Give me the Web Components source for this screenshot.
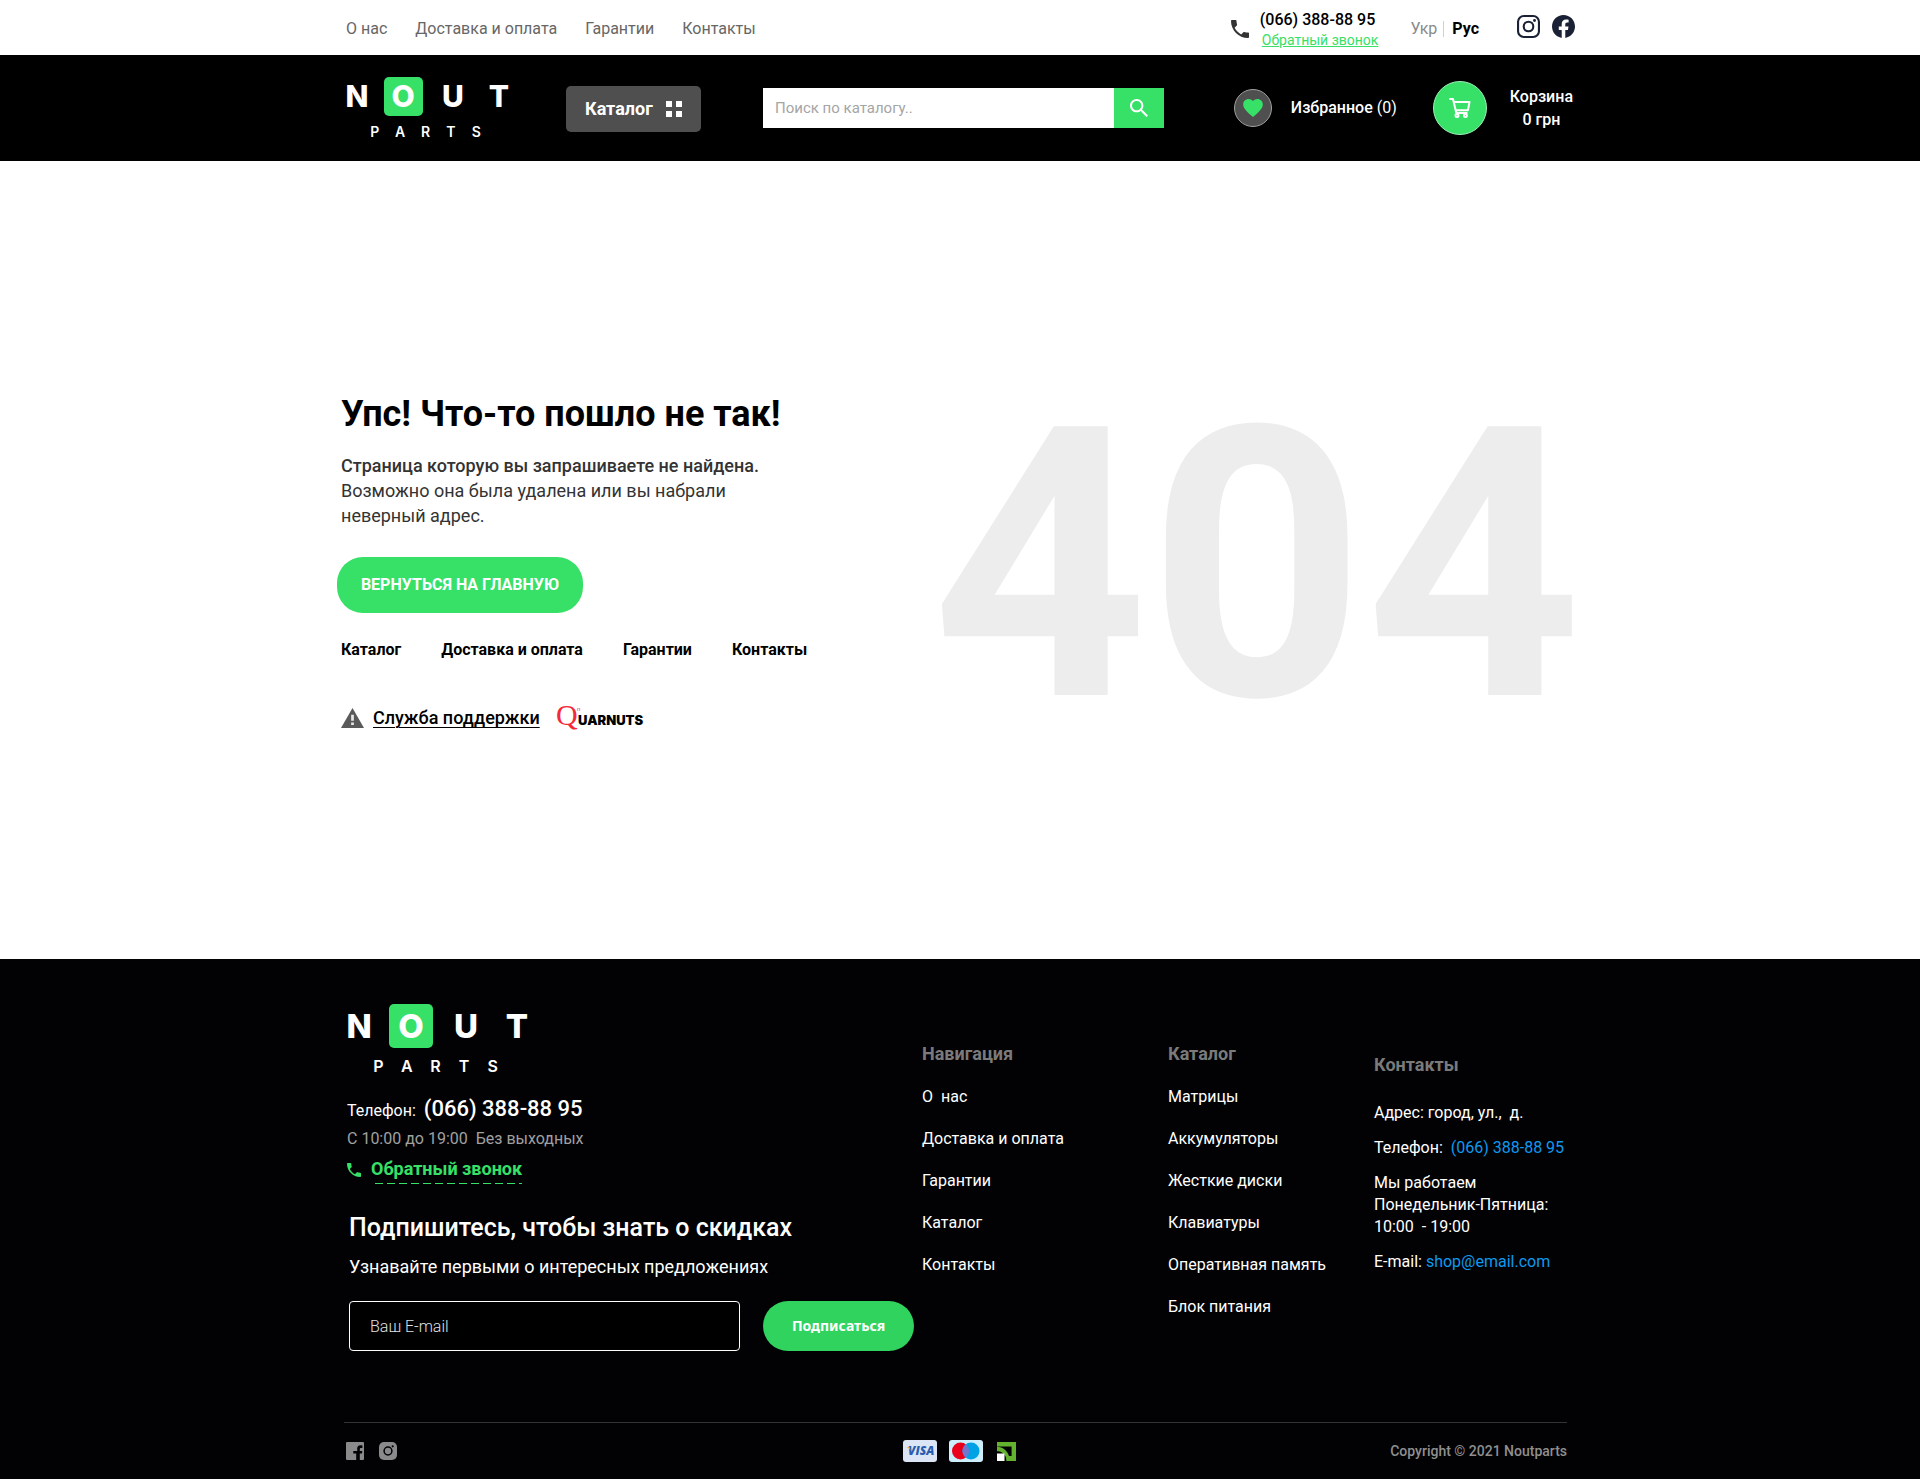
<!DOCTYPE html>
<html lang="ru">
<head>
<meta charset="utf-8">
<meta name="viewport" content="width=device-width, initial-scale=1">
<title>Nout Parts — 404</title>
<style>
  body { margin: 0; background: #fff; color: #000; font: 400 16px/24px Roboto, "Liberation Sans", sans-serif; }
</style>
</head>
<body>
<np-page></np-page>
<script>
const base = `
  *, *::before, *::after { box-sizing: border-box; }
  a { color: inherit; text-decoration: none; }
  button, input { font: inherit; color: inherit; border: 0; margin: 0; padding: 0; }
  button { cursor: pointer; }
  h1, h2, h3, p, ul { margin: 0; padding: 0; }
  ul { list-style: none; }
  svg { display: block; }
  .wrap { width: 100%; max-width: 1232px; margin: 0 auto; }
`;

function define(name, css, html) {
  customElements.define(name, class extends HTMLElement {
    constructor() {
      super();
      const root = this.attachShadow({ mode: "open" });
      const t = document.createElement("template");
      t.innerHTML = `<style>${base}${css}</style>${html}`;
      root.append(t.content.cloneNode(true));
    }
  });
}

const icons = {
  phone: ["3 3 18 18", `<path fill="currentColor" d="M6.62 10.79c1.44 2.83 3.76 5.14 6.59 6.59l2.2-2.2c.27-.27.67-.36 1.02-.24 1.12.37 2.33.57 3.57.57.55 0 1 .45 1 1V20c0 .55-.45 1-1 1-9.39 0-17-7.61-17-17 0-.55.45-1 1-1h3.5c.55 0 1 .45 1 1 0 1.25.2 2.45.57 3.57.11.35.03.74-.25 1.02l-2.2 2.2z"/>`],
  search: ["3 3 17.5 17.5", `<path fill="currentColor" d="M15.5 14h-.79l-.28-.27C15.41 12.59 16 11.11 16 9.5 16 5.91 13.09 3 9.5 3S3 5.91 3 9.5 5.91 16 9.5 16c1.61 0 3.09-.59 4.23-1.57l.27.28v.79l5 4.99L20.49 19l-4.99-5zm-6 0C7.01 14 5 11.99 5 9.5S7.01 5 9.5 5 14 7.01 14 9.5 11.99 14 9.5 14z"/>`],
  grid: ["0 0 16 16", `<path fill="currentColor" d="M0 0h6v6H0zM10 0h6v6h-6zM0 10h6v6H0zM10 10h6v6h-6z"/>`],
  heart: ["2 3 20 18.35", `<path fill="currentColor" d="M12 21.35l-1.45-1.32C5.4 15.36 2 12.28 2 8.5 2 5.42 4.42 3 7.5 3c1.74 0 3.41.81 4.5 2.09C13.09 3.81 14.76 3 16.5 3 19.58 3 22 5.42 22 8.5c0 3.78-3.4 6.86-8.55 11.54L12 21.35z"/>`],
  cart: ["0 0 22 20", `<g fill="none" stroke="currentColor" stroke-width="2" stroke-linejoin="round" stroke-linecap="round"><path d="M1 1h3l3.3 14h10.4"/><path d="M4.900 4h15.600l-1.600 8.200H7"/><circle cx="8" cy="17.400" r="1.500"/><circle cx="16.400" cy="17.400" r="1.500"/></g>`],
  instagram: ["0 0 24 24", `<g fill="none" stroke="currentColor" stroke-width="2.2"><rect x="1.1" y="1.1" width="21.8" height="21.8" rx="6"/><circle cx="12" cy="12" r="5"/></g><circle cx="18.3" cy="5.7" r="1.5" fill="currentColor"/>`],
  facebook: ["0 0 24 24", `<path fill="currentColor" d="M24 12.07C24 5.44 18.63.07 12 .07S0 5.44 0 12.07c0 5.99 4.39 10.96 10.13 11.86v-8.39H7.08v-3.47h3.05V9.43c0-3.01 1.79-4.67 4.53-4.67 1.31 0 2.69.24 2.69.24v2.95h-1.52c-1.49 0-1.96.93-1.96 1.87v2.25h3.33l-.53 3.47h-2.8v8.39C19.61 23.03 24 18.06 24 12.07z"/>`],
  warning: ["1 2 22 19", `<path fill="currentColor" d="M1 21h22L12 2 1 21z"/><path fill="#e8e8e8" d="M10.700 8.500h2.600v5.700h-2.600zM10.700 15.800h2.600v2.400h-2.600z"/>`],
  fbsquare: ["0 0 18 18", `<path fill="currentColor" fill-rule="evenodd" d="M1 0h16a1 1 0 0 1 1 1v16a1 1 0 0 1-1 1h-3.2v-6.6h2.2l.3-2.4h-2.500V7.200c0-.8.3-1.2 1.200-1.200h1.400V3.400c-.3 0-1-.1-1.900-.1-2 0-3.300 1.200-3.300 3.300V9H7.300v2.400h2.900V18H1a1 1 0 0 1-1-1V1a1 1 0 0 1 1-1z"/>`],
  igsquare: ["0 0 18 18", `<rect width="18" height="18" rx="5" fill="currentColor"/><circle cx="9" cy="9" r="3.9" fill="none" stroke="#020204" stroke-width="1.5"/><circle cx="13.700" cy="4.300" r="1.100" fill="#020204"/>`],
  visa: ["0 0 34 22", `<rect width="34" height="22" rx="3" fill="#dbe5f5"/><text x="5" y="15" font-family="Open Sans, sans-serif" font-size="12" font-weight="800" font-style="italic" fill="#2a5db0">VISA</text><path d="M3.500 7h3l1.200 3.600C6.800 9 5.300 7.800 3.500 7z" fill="#f0a92b"/>`],
  maestro: ["0 0 34 22", `<rect width="34" height="22" rx="3" fill="#cdeefd"/><circle cx="11.500" cy="11" r="8.500" fill="#eb001b"/><circle cx="22" cy="11" r="8.500" fill="#00a2e5"/><path d="M16.750 4.300a8.500 8.500 0 0 1 0 13.400a8.500 8.500 0 0 1 0-13.400z" fill="#7375cf"/>`],
  privat: ["0 0 19 19", `<path fill="#62b22f" d="M0 0h19v19H9.300c0-4-1-6-4-8.200C3.700 9.700 2 9.300 0 9.300V4.800c3 .2 5.600 1 7.600 2.600 2.300 1.800 3.600 4 4.400 6.600h2.600V4.400H0z"/><rect y="11.500" width="7.500" height="7.500" fill="#fff"/>`],
  quarnuts: ["0 0 90 26", `<text x="-1" y="20" font-family="Liberation Serif, serif" font-size="30" fill="#f5293a">Q</text><text x="20" y="6" font-family="Liberation Sans, sans-serif" font-size="6" fill="#f5293a">n</text><text x="21" y="20" font-family="Inter, sans-serif" font-size="13" font-weight="900" fill="#000">UARNUTS</text>`]
};

customElements.define("np-icon", class extends HTMLElement {
  constructor() {
    super();
    this.attachShadow({ mode: "open" });
  }
  connectedCallback() {
    const [box, body] = icons[this.getAttribute("name")];
    this.shadowRoot.innerHTML = `<style>:host{display:block;flex:none}svg{display:block;width:100%;height:100%;overflow:visible}</style><svg viewBox="${box}" aria-hidden="true">${body}</svg>`;
  }
});

define("np-logo", `
  :host { display: block; flex: none; color: #fff; font-family: Inter, sans-serif; font-weight: 800; --tile: 39px; --big: 30px; --small: 14px; --gap: 6px; --cols: 20px 72px 28px 64px; --sub: 127px; --nudge: 15px; }
  :host([size="large"]) { --tile: 44px; --big: 33px; --small: 16px; --gap: 8px; --cols: 22px 82px 28px 74px; --sub: 143px; --nudge: 16px; }
  a, .tile { display: block; }
  .top { display: grid; grid-template-columns: var(--cols); justify-items: center; font-size: var(--big); line-height: var(--tile); }
  .tile { width: var(--tile); height: var(--tile); border-radius: 5px; background: #37e067; text-align: center; }
  .sub { display: grid; grid-template-columns: repeat(5, 1fr); justify-items: center; width: var(--sub); margin: var(--gap) 0 0 var(--nudge); font-size: var(--small); line-height: 20px; font-weight: 600; }
`, `<a href="#"><span class="top"><span>N</span><span class="tile">O</span><span>U</span><span>T</span></span>
  <span class="sub"><span>P</span><span>A</span><span>R</span><span>T</span><span>S</span></span></a>`);

define("np-topbar", `
  :host { display: block; }
  .wrap { display: flex; align-items: center; height: 55px; padding: 2px 1px 0 2px; }
  nav { display: flex; gap: 28px; color: #666; }
  .phone { display: flex; align-items: center; gap: 11px; margin-left: auto; }
  .phone np-icon { width: 18px; height: 18px; color: #333; }
  .phone div { display: grid; padding-top: 2px; line-height: 20px; font-weight: 500; }
  .phone .call { padding-left: 2px; font-size: 14px; font-weight: 400; color: #37e067; text-decoration: underline; }
  .lang { display: flex; align-items: center; margin-left: 32px; color: #8a8a8a; }
  .lang a + a { margin-left: 6px; padding-left: 8px; border-left: 1px solid #d0d0d0; line-height: 16px; font-weight: 700; color: #000; }
  .social { display: flex; align-items: center; gap: 12px; margin-left: 38px; padding-bottom: 4px; color: #1b2135; }
  .social np-icon { width: 23px; height: 23px; }
`, `<div class="wrap">
  <nav aria-label="Меню"><a href="#">О нас</a><a href="#">Доставка и оплата</a><a href="#">Гарантии</a><a href="#">Контакты</a></nav>
  <div class="phone"><np-icon name="phone"></np-icon><div><a href="tel:0663888895">(066) 388-88 95</a><a class="call" href="#">Обратный звонок</a></div></div>
  <div class="lang"><a href="#">Укр</a><a href="#">Рус</a></div>
  <div class="social"><a href="#" aria-label="Instagram"><np-icon name="instagram"></np-icon></a><a href="#" aria-label="Facebook"><np-icon name="facebook"></np-icon></a></div>
</div>`);

define("np-header", `
  :host { display: block; background: #000; color: #fff; }
  .wrap { display: flex; align-items: center; height: 106px; padding: 0 3px; font-weight: 500; }
  np-logo { padding-top: 2px; }
  .catalog { display: flex; align-items: center; justify-content: space-between; width: 135px; height: 46px; margin: 2px 0 0 35px; padding: 0 19px; border-radius: 5px; background: #4f4f4f; font-size: 18px; font-weight: 700; }
  .catalog np-icon { width: 16px; height: 16px; }
  form { display: flex; flex: 0 1 401px; height: 40px; margin-left: 62px; }
  input { flex: 1; min-width: 0; padding: 0 12px; border-radius: 0; background: #fff; color: #000; font-size: 15px; font-weight: 400; outline: 0; }
  input::placeholder { color: #a5a5a5; opacity: 1; }
  form button { display: grid; place-items: center; width: 50px; background: #37e067; }
  form np-icon { width: 18px; height: 18px; }
  .fav { display: flex; align-items: center; gap: 19px; margin-left: auto; }
  .round { display: grid; place-items: center; width: 38px; height: 38px; border: 1px solid #a0a0a0; border-radius: 50%; background: #4f4f4f; color: #37e067; }
  .round np-icon { width: 20px; height: 18px; }
  .fav .n { font-weight: 400; }
  .cart { display: flex; align-items: center; gap: 23px; margin-left: 36px; text-align: center; line-height: 23px; }
  .cart .round { width: 54px; height: 54px; border-color: #9bf0b3; background: #37e067; color: #fff; }
  .cart .round np-icon { width: 22px; height: 20px; }
`, `<div class="wrap">
  <np-logo></np-logo>
  <button class="catalog" type="button">Каталог<np-icon name="grid"></np-icon></button>
  <form role="search"><input type="search" aria-label="Поиск по каталогу" placeholder="Поиск по каталогу.."><button type="button" aria-label="Найти"><np-icon name="search"></np-icon></button></form>
  <a class="fav" href="#"><span class="round"><np-icon name="heart"></np-icon></span><span>Избранное <span class="n">(0)</span></span></a>
  <a class="cart" href="#"><span class="round"><np-icon name="cart"></np-icon></span><span>Корзина<br>0 грн</span></a>
</div>`);

define("np-not-found", `
  :host { display: flex; align-items: center; padding-top: 4px; }
  .wrap { display: flex; align-items: center; justify-content: space-between; max-width: 1244px; padding: 0 0 0 3px; }
  h1 { font-size: 36px; line-height: 42px; font-weight: 700; }
  p { margin-top: 18px; font-size: 18px; line-height: 25px; color: #333; }
  p strong { font-weight: 500; }
  .home { display: grid; place-items: center; width: 246px; height: 56px; margin: 29px 0 0 -4px; border-radius: 26px; background: #37e067; color: #fff; font-weight: 700; }
  nav { display: flex; gap: 40px; margin-top: 25px; font-weight: 700; }
  .support { display: flex; align-items: center; height: 24px; margin-top: 44px; font-size: 18px; }
  .support a { margin: 0 17px 0 9px; font-weight: 500; text-decoration: underline; text-underline-offset: 3px; text-decoration-thickness: 1px; }
  .warn { width: 23px; height: 20px; color: #5a5a5a; }
  .brand { width: 90px; height: 26px; }
  .code { font-size: 378px; line-height: 378px; font-weight: 700; color: #ededed; padding-top: 8px; }
`, `<div class="wrap">
  <section>
    <h1>Упс! Что-то пошло не так!</h1>
    <p><strong>Страница которую вы запрашиваете не найдена.</strong><br>Возможно она была удалена или вы набрали<br>неверный адрес.</p>
    <a class="home" href="#">ВЕРНУТЬСЯ НА ГЛАВНУЮ</a>
    <nav aria-label="Разделы"><a href="#">Каталог</a><a href="#">Доставка и оплата</a><a href="#">Гарантии</a><a href="#">Контакты</a></nav>
    <div class="support"><np-icon class="warn" name="warning"></np-icon><a href="#">Служба поддержки</a><np-icon class="brand" name="quarnuts"></np-icon></div>
  </section>
  <div class="code">404</div>
</div>`);

define("np-links", `
  :host { display: block; }
  h3 { margin-bottom: 19px; font-size: 18px; line-height: 24px; font-weight: 700; color: #7a7a7a; }
  ::slotted(a) { display: block; margin-bottom: 18px; line-height: 24px; color: inherit; text-decoration: none; white-space: nowrap; }
`, `<h3><slot name="title"></slot></h3><slot></slot>`);

define("np-subscribe", `
  :host { display: block; }
  h2 { font-size: 25px; line-height: 30px; font-weight: 500; }
  p { margin-top: 12px; font-size: 18px; line-height: 24px; }
  form { display: flex; gap: 23px; margin-top: 22px; }
  input { flex: none; width: 391px; height: 50px; padding: 0 20px; border: 1px solid #fff; border-radius: 4px; background: #000; font-weight: 300; outline: 0; }
  input::placeholder { color: #e0e0e0; opacity: 1; }
  button { width: 151px; height: 50px; border-radius: 25px; background: #2fd35e; color: #fff; font: 700 14px/20px "Noto Sans", "Open Sans", sans-serif; }
`, `<h2>Подпишитесь, чтобы знать о скидках</h2>
<p>Узнавайте первыми о интересных предложениях</p>
<form><input type="email" aria-label="Ваш E-mail" placeholder="Ваш E-mail"><button type="button">Подписаться</button></form>`);

define("np-footer", `
  :host { display: block; background: #020204; color: #fff; }
  .cols { display: grid; grid-template-columns: minmax(0, 1fr) 246px 206px 202px; padding-top: 45px; }
  .lead { padding-left: 3px; }
  np-logo { padding-left: 1px; }
  .tel { display: flex; align-items: baseline; gap: 8px; margin-top: 18px; line-height: 30px; }
  .tel a { font-size: 22px; font-weight: 500; }
  .hours { margin-top: 1px; color: #a0a0a0; }
  .call { display: inline-flex; align-items: center; gap: 10px; margin-top: 6px; color: #37e067; font-size: 18px; font-weight: 700; }
  .call np-icon { width: 14px; height: 14px; }
  .call span { padding-bottom: 3px; background: repeating-linear-gradient(90deg, transparent 0 4px, #37e067 4px 12px) left bottom / 100% 1px no-repeat; }
  np-subscribe { margin: 29px 0 0 2px; }
  .links { padding-top: 38px; }
  .contacts { padding-top: 49px; line-height: 22px; white-space: nowrap; }
  .contacts h3 { margin-bottom: 25px; font-size: 18px; line-height: 24px; font-weight: 700; color: #7a7a7a; }
  .contacts p { margin-top: 13px; }
  .contacts p a { color: #0d99f0; }
  .bottom { display: grid; grid-template-columns: 1fr auto 1fr; align-items: center; height: 57px; max-width: 1223px; margin: 71px 9px 0 0; border-top: 1px solid #333; }
  .row { display: flex; align-items: center; gap: 12px; }
  .social { gap: 15px; padding-left: 2px; color: #8a8a8a; }
  .social np-icon { width: 18px; height: 18px; }
  .cards { padding-left: 8px; }
  .card { width: 34px; height: 22px; }
  .privat { width: 19px; height: 19px; margin-left: 2px; }
  .copy { justify-self: end; font-size: 14px; font-weight: 500; color: #8f8f8f; }
`, `<div class="wrap">
  <div class="cols">
    <div class="lead">
      <np-logo size="large"></np-logo>
      <div class="tel"><span>Телефон:</span><a href="tel:0663888895">(066) 388-88 95</a></div>
      <div class="hours">С 10:00 до 19:00&nbsp; Без выходных</div>
      <a class="call" href="#"><np-icon name="phone"></np-icon><span>Обратный звонок</span></a>
      <np-subscribe></np-subscribe>
    </div>
    <np-links class="links"><span slot="title">Навигация</span><a href="#">О&nbsp; нас</a><a href="#">Доставка и оплата</a><a href="#">Гарантии</a><a href="#">Каталог</a><a href="#">Контакты</a></np-links>
    <np-links class="links"><span slot="title">Каталог</span><a href="#">Матрицы</a><a href="#">Аккумуляторы</a><a href="#">Жесткие диски</a><a href="#">Клавиатуры</a><a href="#">Оперативная память</a><a href="#">Блок питания</a></np-links>
    <div class="contacts">
      <h3>Контакты</h3>
      <p>Адрес: город, ул.,&nbsp; д.</p>
      <p>Телефон:&nbsp; <a href="tel:0663888895">(066) 388-88 95</a></p>
      <p>Мы работаем<br>Понедельник-Пятница:<br>10:00&nbsp; - 19:00</p>
      <p>E-mail: <a href="mailto:shop@email.com">shop@email.com</a></p>
    </div>
  </div>
  <div class="bottom">
    <div class="row social"><a href="#" aria-label="Facebook"><np-icon name="fbsquare"></np-icon></a><a href="#" aria-label="Instagram"><np-icon name="igsquare"></np-icon></a></div>
    <div class="row cards"><np-icon class="card" name="visa"></np-icon><np-icon class="card" name="maestro"></np-icon><np-icon class="privat" name="privat"></np-icon></div>
    <div class="copy">Copyright © 2021 Noutparts</div>
  </div>
</div>`);

define("np-page", `
  :host { display: flex; flex-direction: column; min-height: 100vh; }
  main { display: grid; flex: 1; }
`, `<np-topbar></np-topbar><np-header></np-header><main><np-not-found></np-not-found></main><np-footer></np-footer>`);
</script>
</body>
</html>
